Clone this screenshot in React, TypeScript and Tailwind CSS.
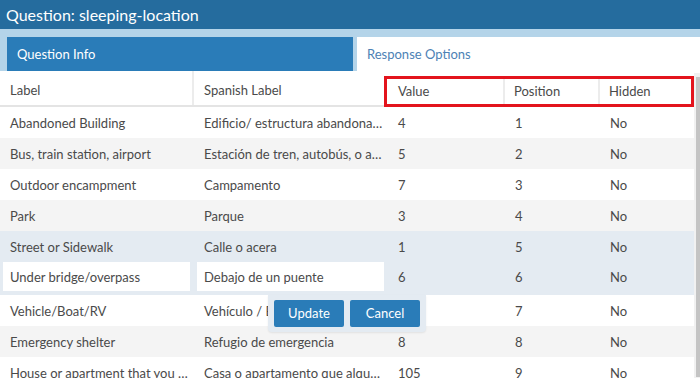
import React from "react";

type Row = {
	label: string;
	spanish: string;
	value: string;
	position: string;
	hidden: string;
	tone: "white" | "gray" | "blue";
};

const rows: Row[] = [
	{ label: "Abandoned Building", spanish: "Edificio/ estructura abandona…", value: "4", position: "1", hidden: "No", tone: "white" },
	{ label: "Bus, train station, airport", spanish: "Estación de tren, autobús, o a…", value: "5", position: "2", hidden: "No", tone: "gray" },
	{ label: "Outdoor encampment", spanish: "Campamento", value: "7", position: "3", hidden: "No", tone: "white" },
	{ label: "Park", spanish: "Parque", value: "3", position: "4", hidden: "No", tone: "gray" },
	{ label: "Street or Sidewalk", spanish: "Calle o acera", value: "1", position: "5", hidden: "No", tone: "blue" },
];

// the value of the vehicle row sits under the update/cancel popup
const afterRows: Row[] = [
	{ label: "Vehicle/Boat/RV", spanish: "Vehículo / B", value: "", position: "7", hidden: "No", tone: "white" },
	{ label: "Emergency shelter", spanish: "Refugio de emergencia", value: "8", position: "8", hidden: "No", tone: "gray" },
	{ label: "House or apartment that you r…", spanish: "Casa o apartamento que alqu…", value: "105", position: "9", hidden: "No", tone: "white" },
];

const toneClass = {
	white: "bg-white",
	gray: "bg-[#f4f4f4]",
	blue: "bg-[#e4ebf2]",
};

const DataRow: React.FC<{ row: Row }> = ({ row }) => (
	<div className={`flex h-[31px] items-center pt-[2px] ${toneClass[row.tone]}`}>
		<div className="w-[194px] shrink-0 truncate pl-[10px] pr-[4px]">{row.label}</div>
		<div className="w-[194px] shrink-0 truncate pl-[10px] pr-[4px]">{row.spanish}</div>
		<div className="w-[117px] shrink-0 pl-[10px]">{row.value}</div>
		<div className="w-[95px] shrink-0 pl-[10px]">{row.position}</div>
		<div className="flex-1 pl-[10px]">{row.hidden}</div>
	</div>
);

export default function App() {
	return (
		<div className="h-[378px] w-[700px] overflow-hidden bg-white font-['Lato',sans-serif] text-[13px] text-[#4a4a4a]">
			{/* title */}
			<div className="flex h-[29px] items-center bg-[#256c9e] pl-[6px] text-[16px] text-white">
				Question: sleeping-location
			</div>
			<div className="h-[8px] bg-[#b4d4e9]" />

			{/* tabs */}
			<div className="flex h-[34px] bg-[#b4d4e9] pl-[7px]">
				<div className="flex w-[346px] items-center bg-[#2a7cb8] pl-[10px] pt-[1px] text-white">Question Info</div>
				<div className="ml-[4px] flex flex-1 items-center bg-white pl-[10px] pt-[1px] text-[#4d82b5]">Response Options</div>
			</div>

			<div className="flex">
				<div className="w-[694px] shrink-0">
					{/* header */}
					<div className="flex h-[36px] items-end border-b-2 border-[#e4e4e4] bg-white">
						<div className="flex h-full w-[194px] shrink-0 items-center border-r-2 border-[#ececec] pl-[10px] pt-[6px]">Label</div>
						<div className="flex h-full w-[194px] shrink-0 items-center pl-[10px] pt-[6px]">Spanish Label</div>
						<div className="-mb-[2px] -ml-[4px] flex h-[31px] flex-1 items-stretch border-[3px] border-[#e3141d]">
							<div className="flex w-[118px] shrink-0 items-center border-r-2 border-[#ececec] pl-[11px]">Value</div>
							<div className="flex w-[95px] shrink-0 items-center border-r-2 border-[#ececec] pl-[9px]">Position</div>
							<div className="flex flex-1 items-center pl-[9px]">Hidden</div>
						</div>
					</div>

					{rows.map((r) => (
						<DataRow key={r.label} row={r} />
					))}

					{/* editing row */}
					<div className="relative flex h-[33px] items-start bg-[#e4ebf2]">
						<div className="ml-[3px] flex h-[29px] w-[187px] shrink-0 items-center bg-white pl-[7px] pt-[2px]">Under bridge/overpass</div>
						<div className="ml-[7px] flex h-[29px] w-[187px] shrink-0 items-center bg-white pl-[7px] pt-[2px]">Debajo de un puente</div>
						<div className="ml-[4px] flex h-[29px] w-[117px] shrink-0 items-center pl-[10px] pt-[2px]">6</div>
						<div className="flex h-[29px] w-[95px] shrink-0 items-center pl-[10px] pt-[2px]">6</div>
						<div className="flex h-[29px] flex-1 items-center pl-[10px] pt-[2px]">No</div>

						<div className="absolute left-[268px] top-[33px] z-10 flex gap-[6px] rounded-b-[4px] bg-[#e4ebf2] px-[6px] pb-[5px] pt-[5px] shadow-[0_1px_2px_rgba(0,0,0,0.08)]">
							<button className="h-[27px] w-[70px] rounded-[2px] bg-[#2a7cb8] text-[13px] text-white">Update</button>
							<button className="h-[27px] w-[70px] rounded-[2px] bg-[#2a7cb8] text-[13px] text-white">Cancel</button>
						</div>
					</div>

					{afterRows.map((r) => (
						<DataRow key={r.label} row={r} />
					))}
				</div>

				{/* scrollbar */}
				<div className="mt-[2px] flex flex-1 bg-[#f1f1f1]">
					<div className="ml-[2px] mt-[4px] h-[300px] flex-1 bg-[#c4c4c4]" />
				</div>
			</div>
		</div>
	);
}
